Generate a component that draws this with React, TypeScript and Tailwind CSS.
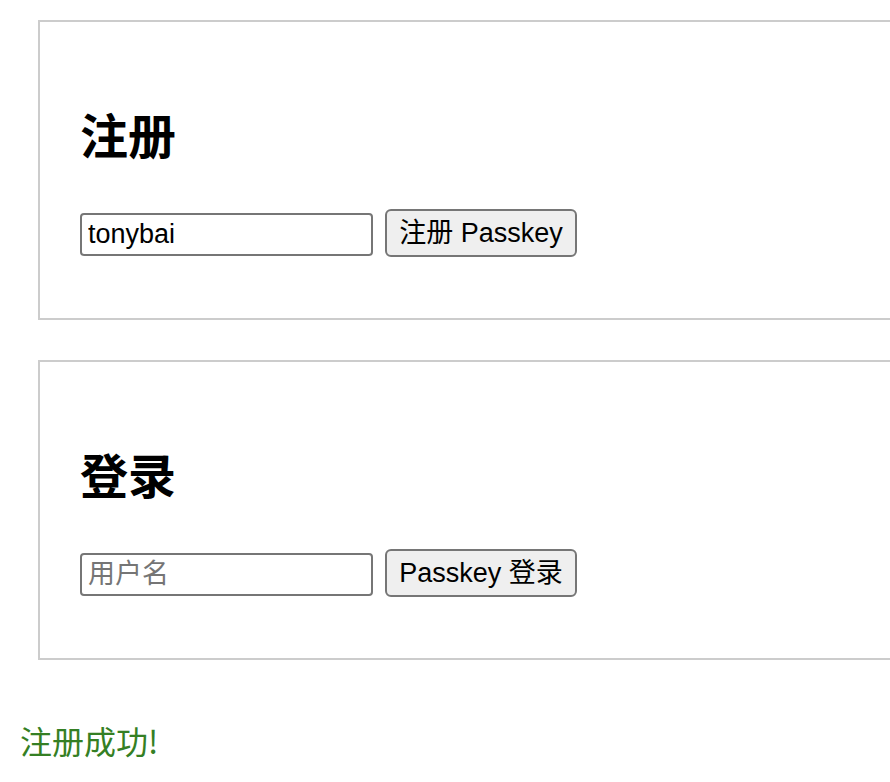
import React from "react";

const latin = "font-['Liberation_Sans','Noto_Sans_CJK_SC',sans-serif]";
const cjk = "font-['Noto_Sans_CJK_SC','Liberation_Sans',sans-serif]";

function Box({ title, value, placeholder, button }: { title: string; value?: string; placeholder?: string; button: string }) {
  return (
    <div className="ml-[38px] mr-[-40px] border-2 border-[#cccccc] pl-[40px] pt-[83px] pb-[61px]">
      <h2 className={`${cjk} text-[48px] leading-[56px] font-bold text-black`}>{title}</h2>
      <div className="mt-[48px] flex h-[48px] items-center gap-[12px]">
        <input
          defaultValue={value}
          placeholder={placeholder}
          className={`${latin} mt-[2px] h-[43px] w-[293px] rounded-[4px] border-2 border-[#767676] bg-white px-[6px] text-[27px] text-black outline-none placeholder:text-[#757575]`}
        />
        <button
          className={`${latin} h-[48px] w-[192px] rounded-[6px] border-2 border-[#767676] bg-[#efefef] text-[27px] leading-none text-black`}
        >
          {button}
        </button>
      </div>
    </div>
  );
}

export default function App() {
  return (
    <div className="min-h-[782px] w-full overflow-hidden bg-white pt-[20px]">
      <Box title="注册" value="tonybai" button="注册 Passkey" />
      <div className="h-[40px]" />
      <Box title="登录" placeholder="用户名" button="Passkey 登录" />
      <p className={`${cjk} ml-[20px] mt-[60px] text-[32px] leading-[40px] text-[#357f24]`}>注册成功!</p>
    </div>
  );
}
